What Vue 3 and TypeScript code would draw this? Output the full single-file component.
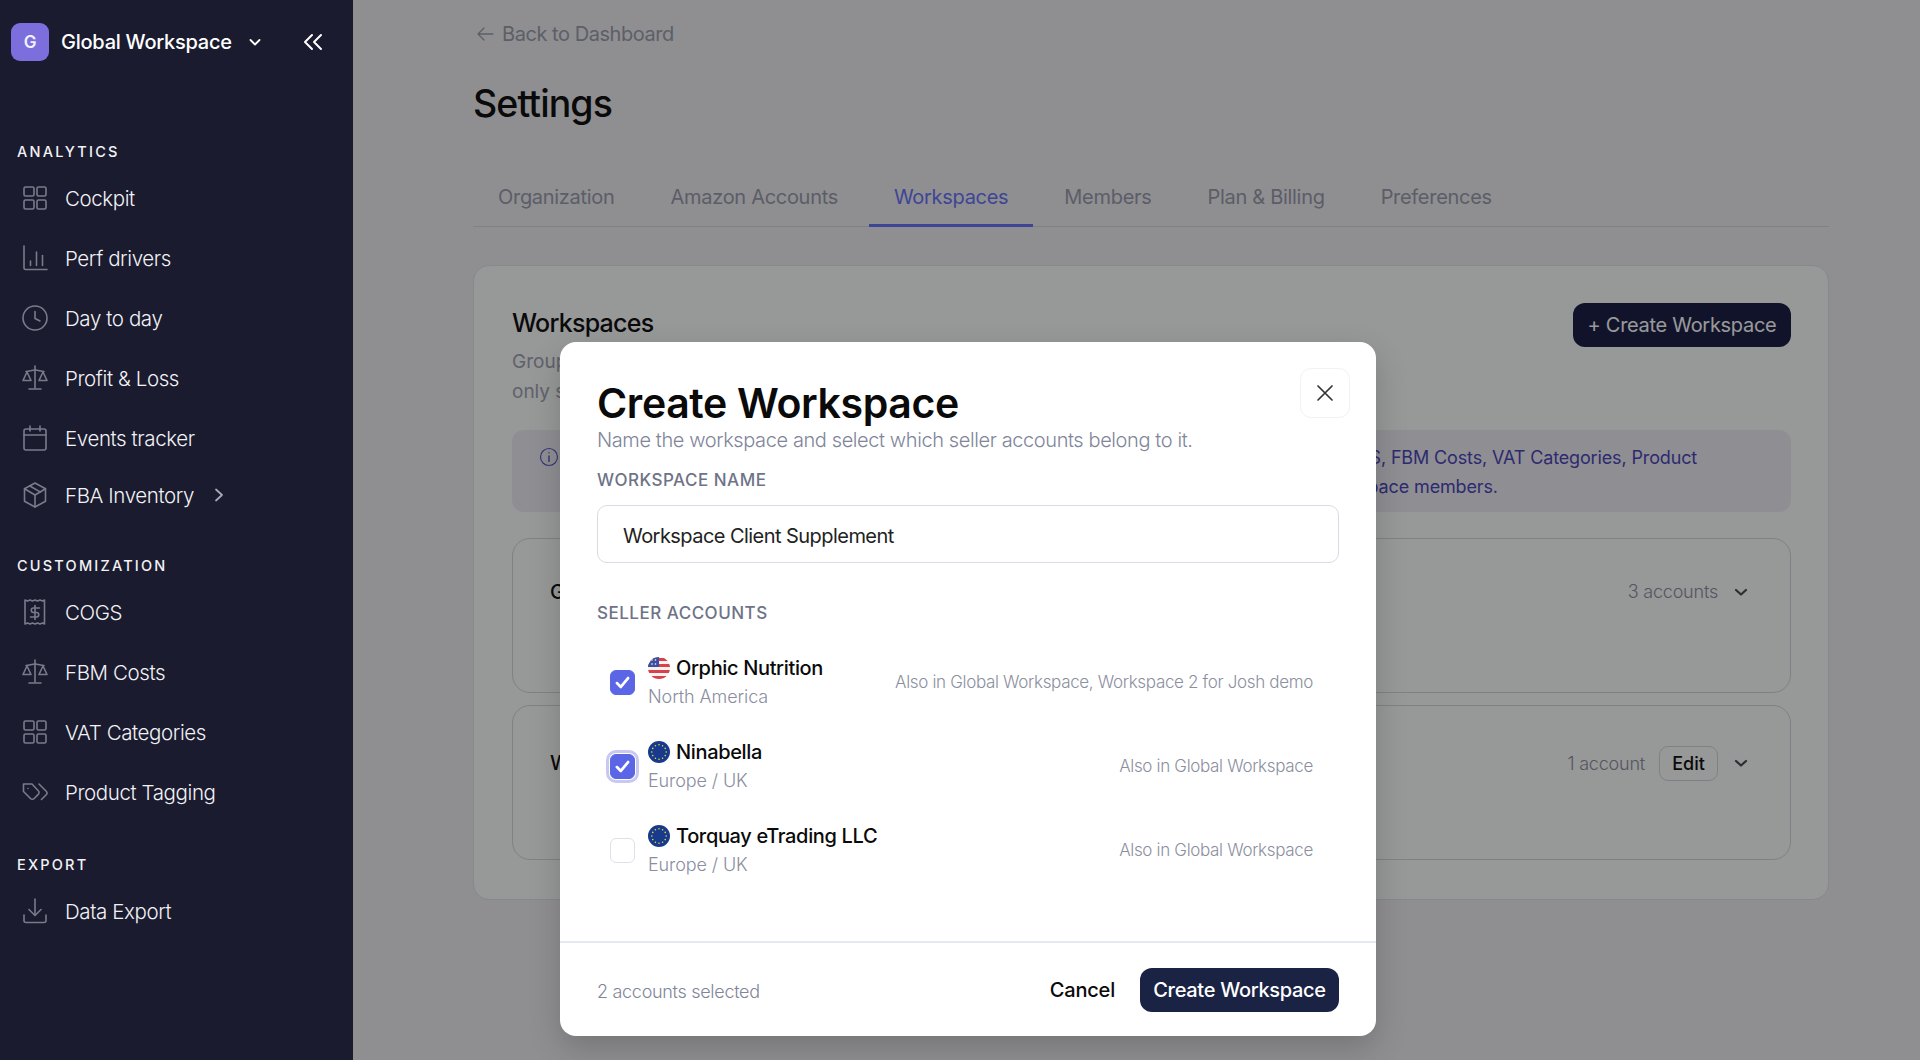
<script setup lang="ts">
import { ref, computed } from 'vue'

// stroke paths per icon, drawn in a 26 box
const icons: Record<string, string[]> = {
  grid: [
    'M3.5 2h7a1.5 1.5 0 0 1 1.5 1.5v6a1.5 1.5 0 0 1-1.5 1.5h-7a1.5 1.5 0 0 1-1.5-1.5v-6A1.5 1.5 0 0 1 3.5 2Z',
    'M16.5 2h6a1.5 1.5 0 0 1 1.5 1.5v6a1.5 1.5 0 0 1-1.5 1.5h-6a1.5 1.5 0 0 1-1.5-1.5v-6A1.5 1.5 0 0 1 16.5 2Z',
    'M3.5 15h7a1.5 1.5 0 0 1 1.5 1.5v6a1.5 1.5 0 0 1-1.5 1.5h-7a1.5 1.5 0 0 1-1.5-1.5v-6A1.5 1.5 0 0 1 3.5 15Z',
    'M16.5 15h6a1.5 1.5 0 0 1 1.5 1.5v6a1.5 1.5 0 0 1-1.5 1.5h-6a1.5 1.5 0 0 1-1.5-1.5v-6A1.5 1.5 0 0 1 16.5 15Z',
  ],
  bars: ['M2 1v22a1.5 1.5 0 0 0 1.5 1.5H25', 'M8.5 16v4.5', 'M14.5 7v13.5', 'M20.5 10.500v10'],
  clock: ['M13 1a12 12 0 1 0 0 24a12 12 0 1 0 0-24Z', 'M13 6.500v7l5 2.500'],
  scale: [
    'M13 1v22',
    'M7 24h12',
    'M4 6.500c3 0 6-1.500 9-1.500s6 1.500 9 1.500',
    'M5 7l-4 8.500h8Z',
    'M21 7l-4 8.500h8Z',
  ],
  calendar: [
    'M4 4h18a2 2 0 0 1 2 2v17a2 2 0 0 1-2 2H4a2 2 0 0 1-2-2V6a2 2 0 0 1 2-2Z',
    'M2 10h22',
    'M8 1v5',
    'M18 1v5',
  ],
  box: [
    'M13 1l10.500 5.700v12.600L13 25 2.500 19.300V6.700Z',
    'M2.500 6.700L13 13l10.500-6.300',
    'M13 13v12',
    'M7.500 3.800l11 6.300',
  ],
  receipt: [
    'M3 1l2.500 1 2.500-1 2.500 1 2.500-1 2.500 1 2.500-1 2.500 1 2-1v24l-2-1-2.500 1-2.500-1-2.500 1-2.500-1-2.500 1-2.500-1-2.500 1Z',
    'M17.500 9h-6a2.200 2.200 0 0 0 0 4.500h3a2.200 2.200 0 0 1 0 4.500H8.500',
    'M13 6.500v14',
  ],
  tags: [
    'M10 5H1.500v7.500l7 7c1 1 2.700 1 3.700 0l4.100-4.100c1-1 1-2.700 0-3.700Z',
    'M6 9.500v-.01',
    'M17 5l7.200 7.200a2.600 2.600 0 0 1 0 3.600L19.500 20.500',
  ],
  download: [
    'M13 1v16',
    'M7 11.500l6 6 6-6',
    'M2 17v5.500A2 2 0 0 0 4 24.500h18a2 2 0 0 0 2-2V17',
  ],
}

const navSections = [
  {
    title: 'ANALYTICS',
    items: [
      { label: 'Cockpit', icon: 'grid' },
      { label: 'Perf drivers', icon: 'bars' },
      { label: 'Day to day', icon: 'clock' },
      { label: 'Profit & Loss', icon: 'scale' },
      { label: 'Events tracker', icon: 'calendar' },
      { label: 'FBA Inventory', icon: 'box', sub: true },
    ],
  },
  {
    title: 'CUSTOMIZATION',
    items: [
      { label: 'COGS', icon: 'receipt' },
      { label: 'FBM Costs', icon: 'scale' },
      { label: 'VAT Categories', icon: 'grid' },
      { label: 'Product Tagging', icon: 'tags' },
    ],
  },
  {
    title: 'EXPORT',
    items: [{ label: 'Data Export', icon: 'download' }],
  },
]

const tabs = ['Organization', 'Amazon Accounts', 'Workspaces', 'Members', 'Plan & Billing', 'Preferences']
const activeTab = ref('Workspaces')

const workspaceName = ref('Workspace Client Supplement')

const accounts = ref([
  { id: 1, name: 'Orphic Nutrition', region: 'North America', flag: 'us', note: 'Also in Global Workspace, Workspace 2 for Josh demo', checked: true, focus: false },
  { id: 2, name: 'Ninabella', region: 'Europe / UK', flag: 'eu', note: 'Also in Global Workspace', checked: true, focus: true },
  { id: 3, name: 'Torquay eTrading LLC', region: 'Europe / UK', flag: 'eu', note: 'Also in Global Workspace', checked: false, focus: false },
])

const selectedCount = computed(() => accounts.value.filter((a) => a.checked).length)

// ring of stars on the EU flag
const euStars = Array.from({ length: 12 }, (_, i) => {
  const a = (i * Math.PI) / 6
  return { x: 11 + Math.cos(a) * 7.200, y: 11 + Math.sin(a) * 7.200 }
})
</script>

<template>
  <div class="app">
    <aside class="sidebar">
      <div class="ws-head">
        <div class="ws-avatar">G</div>
        <span class="ws-name">Global Workspace</span>
        <svg class="ws-chevron" width="14" height="14" viewBox="0 0 14 14" fill="none">
          <path d="M2.500 5l4.500 4.500L11.500 5" stroke="#fff" stroke-width="1.800" stroke-linecap="round" stroke-linejoin="round" />
        </svg>
        <svg class="ws-collapse" width="20" height="18" viewBox="0 0 20 18" fill="none">
          <path d="M9 2L2 9l7 7M18 2l-7 7 7 7" stroke="#fff" stroke-width="2" stroke-linecap="round" stroke-linejoin="round" />
        </svg>
      </div>

      <section v-for="section in navSections" :key="section.title" class="nav-section">
        <div class="nav-title">{{ section.title }}</div>
        <div
          v-for="item in section.items"
          :key="item.label"
          class="nav-item"
          :class="{ short: item.sub }"
        >
          <svg class="nav-icon" width="26" height="26" viewBox="0 0 26 26" fill="none">
            <path v-for="d in icons[item.icon]" :key="d" :d="d" />
          </svg>
          <span>{{ item.label }}</span>
          <svg v-if="item.sub" class="nav-sub" width="12" height="16" viewBox="0 0 12 16" fill="none">
            <path d="M3 2.500L9 8l-6 5.500" stroke="#a9a9b4" stroke-width="1.800" stroke-linecap="round" stroke-linejoin="round" />
          </svg>
        </div>
      </section>
    </aside>

    <main class="main">
      <a class="back">
        <svg width="18" height="16" viewBox="0 0 18 16" fill="none">
          <path d="M17 8H2M8 2L2 8l6 6" stroke="currentColor" stroke-width="1.300" stroke-linecap="round" stroke-linejoin="round" />
        </svg>
        Back to Dashboard
      </a>
      <h1 class="page-title">Settings</h1>

      <nav class="tabs">
        <div v-for="tab in tabs" :key="tab" class="tab" :class="{ active: tab === activeTab }">{{ tab }}</div>
      </nav>

      <div class="card">
        <div class="card-head">
          <div>
            <h2 class="card-title">Workspaces</h2>
            <p class="card-desc">Group your seller accounts into workspaces to organize reporting,<br />only selected accounts are visible inside a workspace.</p>
          </div>
          <button class="btn-dark">+ Create Workspace</button>
        </div>

        <div class="info">
          <svg class="info-icon" width="20" height="20" viewBox="0 0 20 20" fill="none">
            <circle cx="10" cy="10" r="8.500" stroke="#5a5fc8" stroke-width="1.200" />
            <path d="M10 9v5.500M10 5.800v.01" stroke="#5a5fc8" stroke-width="1.500" stroke-linecap="round" />
          </svg>
          <div class="info-text">
            <div>Every workspace keeps its own dashboards and all its reports, while sharing one setup for COGS, FBM Costs, VAT Categories, Product</div>
            <div>Tagging and Data Export settings, which stay fully editable and are only ever visible to all workspace members.</div>
          </div>
        </div>

        <div class="ws-row">
          <div class="ws-row-head">
            <span class="ws-row-name">Global Workspace</span>
            <span class="ws-count">3 accounts</span>
            <svg width="18" height="18" viewBox="0 0 18 18" fill="none">
              <path d="M4 7l5 4.500L14 7" stroke="#4b4c56" stroke-width="2.200" stroke-linecap="round" stroke-linejoin="round" />
            </svg>
          </div>
        </div>

        <div class="ws-row">
          <div class="ws-row-head">
            <span class="ws-row-name">Workspace 2 for Josh demo</span>
            <span class="ws-count">1 account</span>
            <button class="btn-edit">Edit</button>
            <svg width="18" height="18" viewBox="0 0 18 18" fill="none">
              <path d="M4 7l5 4.500L14 7" stroke="#4b4c56" stroke-width="2.200" stroke-linecap="round" stroke-linejoin="round" />
            </svg>
          </div>
        </div>
      </div>

      <div class="overlay">
        <div class="modal">
          <button class="modal-close">
            <svg width="18" height="18" viewBox="0 0 18 18" fill="none">
              <path d="M2 2l14 14M16 2L2 16" stroke="#333" stroke-width="1.700" stroke-linecap="round" />
            </svg>
          </button>

          <div class="modal-body">
            <h2 class="modal-title">Create Workspace</h2>
            <p class="modal-sub">Name the workspace and select which seller accounts belong to it.</p>

            <div class="field-label">WORKSPACE NAME</div>
            <input v-model="workspaceName" class="field-input" type="text" />

            <div class="field-label seller">SELLER ACCOUNTS</div>
            <div class="acc-list">
              <div v-for="acc in accounts" :key="acc.id" class="acc-row">
                <span class="check" :class="{ on: acc.checked, focus: acc.focus }">
                  <svg v-if="acc.checked" width="19" height="19" viewBox="0 0 17 17" fill="none">
                    <path d="M3.500 9l3.500 3.500 6.500-8" stroke="#fff" stroke-width="2.400" stroke-linecap="round" stroke-linejoin="round" />
                  </svg>
                </span>
                <div class="acc-text">
                  <div class="acc-name">
                    <svg v-if="acc.flag === 'us'" width="22" height="22" viewBox="0 0 22 22">
                      <defs>
                        <clipPath id="us-clip"><circle cx="11" cy="11" r="11" /></clipPath>
                      </defs>
                      <g clip-path="url(#us-clip)">
                        <rect width="22" height="22" fill="#f4f1f1" />
                        <rect y="1" width="22" height="3" fill="#d8404a" />
                        <rect y="7" width="22" height="3" fill="#d8404a" />
                        <rect y="13" width="22" height="3" fill="#d8404a" />
                        <rect y="19" width="22" height="3" fill="#d8404a" />
                        <rect width="11" height="10" fill="#3b4f9e" />
                        <circle cx="4" cy="3" r=".8" fill="#fff" />
                        <circle cx="7.500" cy="3" r=".8" fill="#fff" />
                        <circle cx="4" cy="7" r=".8" fill="#fff" />
                        <circle cx="7.500" cy="7" r=".8" fill="#fff" />
                      </g>
                    </svg>
                    <svg v-else width="22" height="22" viewBox="0 0 22 22">
                      <circle cx="11" cy="11" r="11" fill="#173a8c" />
                      <circle v-for="(s, i) in euStars" :key="i" :cx="s.x" :cy="s.y" r=".8" fill="#e8d24a" />
                    </svg>
                    <span>{{ acc.name }}</span>
                  </div>
                  <div class="acc-region">{{ acc.region }}</div>
                </div>
                <span class="acc-note">{{ acc.note }}</span>
              </div>
            </div>
          </div>

          <div class="modal-foot">
            <span class="selected">{{ selectedCount }} accounts selected</span>
            <button class="btn-cancel">Cancel</button>
            <button class="btn-create">Create Workspace</button>
          </div>
        </div>
      </div>
    </main>
  </div>
</template>

<style>
html,
body {
  margin: 0;
  height: 100%;
  overflow: hidden;
}
</style>

<style scoped>
.app {
  display: flex;
  width: 1920px;
  height: 1060px;
  overflow: hidden;
  font-family: Inter, 'Noto Sans', sans-serif;
  color: #111;
}

.sidebar {
  width: 353px;
  flex-shrink: 0;
  box-sizing: border-box;
  padding-top: 23px;
  background: #1a1b2e;
  color: #f2f2f6;
}

.ws-head {
  display: flex;
  align-items: center;
  height: 38px;
  padding-left: 11px;
}

.ws-avatar {
  width: 38px;
  height: 38px;
  border-radius: 9px;
  background: #7c6fdd;
  color: #f3f1fd;
  font-size: 17px;
  font-weight: 600;
  display: flex;
  align-items: center;
  justify-content: center;
}

.ws-name {
  margin-left: 12px;
  font-size: 20px;
  font-weight: 500;
  letter-spacing: -0.25px;
  color: #fff;
}

.ws-chevron {
  margin-left: 16px;
}

.ws-collapse {
  margin-left: 41px;
}

.nav-section {
  margin-top: 33px;
}

.nav-section:nth-of-type(1) {
  margin-top: 81px;
}

.nav-section:nth-of-type(2) {
  margin-top: 34px;
}

.nav-title {
  padding-left: 17px;
  margin-bottom: 6px;
  font-size: 14.500px;
  line-height: 20px;
  font-weight: 500;
  letter-spacing: 2.200px;
  color: #f2f2f6;
}

.nav-item {
  display: flex;
  align-items: center;
  gap: 17px;
  height: 60px;
  padding-left: 22px;
  font-size: 20.500px;
  font-weight: 300;
  letter-spacing: -0.4px;
}

.nav-item.short {
  height: 54px;
}

.nav-icon {
  stroke: #7a7b8a;
  stroke-width: 1.600;
  stroke-linecap: round;
  stroke-linejoin: round;
}

.nav-sub {
  margin-left: 2px;
}

.main {
  position: relative;
  flex: 1;
  box-sizing: border-box;
  padding: 22px 91px 0 120px;
  background: #eeeef2;
}

.back {
  display: flex;
  align-items: center;
  gap: 8px;
  height: 24px;
  padding-left: 3px;
  font-size: 20px;
  font-weight: 400;
  letter-spacing: -0.45px;
  color: #9b9eae;
}

.page-title {
  margin: 34px 0 0;
  font-size: 37.500px;
  line-height: 48px;
  font-weight: 500;
  letter-spacing: -0.9px;
  color: #111;
}

.tabs {
  display: flex;
  gap: 6px;
  margin-top: 42px;
  border-bottom: 1.500px solid #d5d7e0;
}

.tab {
  padding: 15px 25px;
  margin-bottom: -1.500px;
  border-bottom: 3px solid transparent;
  font-size: 20px;
  line-height: 24px;
  letter-spacing: -0.3px;
  color: #999cad;
}

.tab.active {
  color: #6973f8;
  border-bottom-color: #6973f8;
}

.card {
  box-sizing: border-box;
  height: 635px;
  margin-top: 38px;
  padding: 37px 37px 37px 38px;
  border: 1px solid #dfe3f0;
  border-radius: 16px;
  background: #fcfdfd;
}

.card-head {
  display: flex;
  justify-content: space-between;
  align-items: flex-start;
}

.card-title {
  margin: 5px 0 0;
  font-size: 25px;
  line-height: 30px;
  font-weight: 500;
  letter-spacing: -0.75px;
  color: #111;
}

.card-desc {
  margin: 9px 0 0;
  font-size: 19px;
  line-height: 30px;
  color: #a0a3b2;
  white-space: nowrap;
}

.btn-dark {
  height: 44px;
  width: 218px;
  border: none;
  border-radius: 12px;
  background: #1c2146;
  color: #fff;
  font-family: inherit;
  font-size: 20px;
  letter-spacing: -0.3px;
  padding: 0;
}

.info {
  display: flex;
  gap: 11px;
  height: 82px;
  box-sizing: border-box;
  margin-top: 23px;
  padding: 13px 0 0 27px;
  border-radius: 12px;
  background: #eeeef6;
}

.info-icon {
  margin-top: 4px;
  flex-shrink: 0;
}

.info-text {
  font-size: 18px;
  line-height: 29px;
  color: #4d46ba;
  letter-spacing: -0.14px;
  white-space: nowrap;
}

.ws-row {
  box-sizing: border-box;
  height: 155px;
  margin-top: 12px;
  padding: 40px 40px 0 37px;
  border: 1px solid #d5d7e0;
  border-radius: 18px;
}

.info + .ws-row {
  margin-top: 26px;
}

.ws-row-head {
  display: flex;
  align-items: center;
  gap: 14px;
  min-height: 26px;
}

.ws-row-name {
  flex: 1;
  font-size: 20px;
  font-weight: 500;
}

.ws-count {
  font-size: 18px;
  font-weight: 300;
  letter-spacing: -0.2px;
  color: #8d90a0;
}

.btn-edit {
  width: 59px;
  height: 35px;
  padding: 0;
  border: 1px solid #d5d7e0;
  border-radius: 9px;
  background: transparent;
  font-family: inherit;
  font-size: 18px;
  font-weight: 500;
  color: #111;
}

.overlay {
  position: absolute;
  inset: 0;
  box-sizing: border-box;
  padding: 342px 0 0 207px;
  background: rgba(0, 0, 0, 0.4);
}

.modal {
  position: relative;
  display: flex;
  flex-direction: column;
  width: 816px;
  height: 694px;
  border-radius: 16px;
  background: #fff;
  box-shadow: 0 12px 32px rgba(0, 0, 0, 0.18);
}

.modal-close {
  position: absolute;
  top: 26px;
  right: 26px;
  width: 50px;
  height: 50px;
  display: flex;
  align-items: center;
  justify-content: center;
  padding: 0;
  border: 1px solid #f1f2f5;
  border-radius: 11px;
  background: #fff;
}

.modal-body {
  flex: 1;
  padding: 37px 37px 0 37px;
}

.modal-title {
  margin: 0;
  font-size: 41px;
  line-height: 48px;
  font-weight: 600;
  letter-spacing: -0.35px;
  color: #0a0a0a;
}

.modal-sub {
  margin: 0;
  font-size: 20px;
  font-weight: 300;
  line-height: 26px;
  letter-spacing: -0.4px;
  color: #80859a;
}

.field-label {
  margin-top: 16px;
  font-size: 17px;
  line-height: 22px;
  font-weight: 500;
  letter-spacing: 0.5px;
  color: #6e7387;
}

.field-label.seller {
  margin-top: 39px;
}

.field-input {
  display: block;
  box-sizing: border-box;
  width: 100%;
  height: 58px;
  margin-top: 14px;
  padding: 3px 25px 0;
  border: 1.500px solid #d9dbe4;
  border-radius: 10px;
  outline: none;
  font-family: inherit;
  font-size: 20px;
  letter-spacing: -0.55px;
  color: #222;
}

.acc-list {
  margin-top: 16px;
}

.acc-row {
  display: flex;
  align-items: center;
  height: 84px;
  padding: 0 26px 0 13px;
}

.check {
  box-sizing: border-box;
  width: 25px;
  height: 25px;
  flex-shrink: 0;
  display: flex;
  align-items: center;
  justify-content: center;
  border: 1.500px solid #dfe1e8;
  border-radius: 6px;
}

.check.on {
  border-color: #5b66e6;
  background: #5b66e6;
}

.check.focus {
  box-shadow: 0 0 0 1px #fff, 0 0 0 4px #c9c8f0;
}

.acc-text {
  margin-left: 13px;
}

.acc-name {
  display: flex;
  align-items: center;
  gap: 6px;
  height: 29px;
  font-size: 20px;
  font-weight: 450;
  letter-spacing: -0.35px;
  color: #0a0a0a;
}

.acc-region {
  height: 29px;
  line-height: 29px;
  font-size: 18px;
  font-weight: 300;
  letter-spacing: -0.1px;
  color: #8a8e9f;
}

.acc-note {
  margin-left: auto;
  font-size: 17px;
  font-weight: 300;
  letter-spacing: -0.33px;
  color: #8b8fa0;
}

.modal-foot {
  display: flex;
  align-items: center;
  height: 95px;
  box-sizing: border-box;
  padding: 0 37px;
  border-top: 2px solid #e6e8f0;
}

.selected {
  margin-right: auto;
  padding-top: 4px;
  font-size: 18px;
  font-weight: 300;
  letter-spacing: -0.3px;
  color: #80859a;
}

.btn-cancel {
  padding: 0;
  border: none;
  background: none;
  font-family: inherit;
  font-size: 20px;
  font-weight: 500;
  letter-spacing: -0.2px;
  color: #0a0a0a;
}

.btn-create {
  width: 199px;
  height: 44px;
  margin-left: 25px;
  padding: 0;
  border: none;
  border-radius: 12px;
  background: #1a2344;
  font-family: inherit;
  font-size: 20px;
  font-weight: 500;
  letter-spacing: -0.3px;
  color: #fff;
}
</style>
